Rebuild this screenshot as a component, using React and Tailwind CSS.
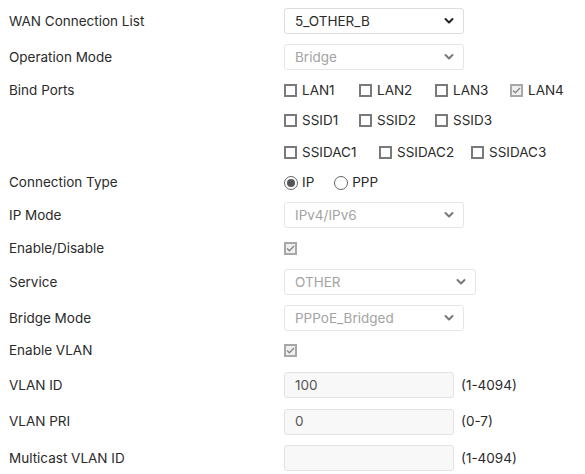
import React from 'react';

const font = { fontFamily: 'Inter, "Noto Sans", sans-serif' };

function Chevron({ muted }) {
  return (
    <svg width="10" height="7" viewBox="0 0 10 7" className="absolute right-[9px] top-1/2 -translate-y-1/2">
      <path d="M1.5 1.5 L5 5 L8.5 1.5" fill="none" stroke={muted ? '#777' : '#222'} strokeWidth="2" strokeLinecap="round" strokeLinejoin="round" />
    </svg>
  );
}

function Select({ value, disabled, wide }) {
  return (
    <div
      className={
        'relative h-[26px] rounded-[3px] border flex items-center pl-[10px] ' +
        (wide ? 'w-[192px] ' : 'w-[180px] ') +
        (disabled ? 'border-[#e6e6e6] text-[#a3a3a3] bg-white' : 'border-[#dcdcdc] text-[#2b2b2b] bg-white')
      }
    >
      {value}
      <Chevron muted={disabled} />
    </div>
  );
}

function Box({ checked }) {
  if (checked) {
    return (
      <span className="w-[13px] h-[13px] border-2 border-[#a8a8a8] bg-[#f0f0f0] flex items-center justify-center shrink-0">
        <svg width="9" height="7" viewBox="0 0 9 7">
          <path d="M1 3.5 L3.4 5.8 L8 1" fill="none" stroke="#888" strokeWidth="1.4" />
        </svg>
      </span>
    );
  }
  return <span className="w-[13px] h-[13px] border-2 border-[#7a7a7a] bg-white shrink-0"></span>;
}

function Check({ label, checked, gap }) {
  return (
    <div className={'flex items-center ' + gap}>
      <Box checked={checked} />
      <span className="ml-[5px]">{label}</span>
    </div>
  );
}

function Radio({ label, selected }) {
  return (
    <div className="flex items-center mr-[20px]">
      <span className="w-[14px] h-[14px] rounded-full border border-[#666] flex items-center justify-center bg-white">
        {selected && <span className="w-[8px] h-[8px] rounded-full bg-[#555]"></span>}
      </span>
      <span className="ml-[4px]">{label}</span>
    </div>
  );
}

function Input({ value, hint }) {
  return (
    <div className="flex items-center">
      <div className="w-[170px] h-[26px] rounded-[3px] border border-[#e3e3e3] bg-[#f8f8f8] flex items-center pl-[10px] text-[#555]">
        {value}
      </div>
      <span className="ml-[7px] text-[#2b2b2b]">{hint}</span>
    </div>
  );
}

function Row({ label, h, children }) {
  return (
    <div className={'flex items-center ' + h}>
      <div className="w-[284px] pl-[9px] shrink-0">{label}</div>
      <div className="flex items-center">{children}</div>
    </div>
  );
}

export default function App() {
  return (
    <div className="w-[585px] h-[474px] bg-white text-[13.5px] text-[#2b2b2b] pt-[3px] overflow-hidden" style={font}>
      <Row label="WAN Connection List" h="h-[36px]">
        <Select value="5_OTHER_B" />
      </Row>
      <Row label="Operation Mode" h="h-[36px]">
        <Select value="Bridge" disabled />
      </Row>
      <div className="flex">
        <div className="w-[284px] pl-[9px] shrink-0 h-[30px] flex items-center">Bind Ports</div>
        <div className="flex flex-col">
          <div className="flex items-center h-[30px]">
            <Check label="LAN1" gap="w-[75px]" />
            <Check label="LAN2" gap="w-[76px]" />
            <Check label="LAN3" gap="w-[75px]" />
            <Check label="LAN4" checked gap="" />
          </div>
          <div className="flex items-center h-[31px]">
            <Check label="SSID1" gap="w-[75px]" />
            <Check label="SSID2" gap="w-[76px]" />
            <Check label="SSID3" gap="" />
          </div>
          <div className="flex items-center h-[32px]">
            <Check label="SSIDAC1" gap="w-[95px]" />
            <Check label="SSIDAC2" gap="w-[92px]" />
            <Check label="SSIDAC3" gap="" />
          </div>
        </div>
      </div>
      <Row label="Connection Type" h="h-[29px]">
        <Radio label="IP" selected />
        <Radio label="PPP" />
      </Row>
      <Row label="IP Mode" h="h-[36px]">
        <Select value="IPv4/IPv6" disabled />
      </Row>
      <Row label="Enable/Disable" h="h-[30px]">
        <Box checked />
      </Row>
      <Row label="Service" h="h-[38px]">
        <Select value="OTHER" disabled wide />
      </Row>
      <Row label="Bridge Mode" h="h-[34px]">
        <Select value="PPPoE_Bridged" disabled />
      </Row>
      <Row label="Enable VLAN" h="h-[31px]">
        <Box checked />
      </Row>
      <Row label="VLAN ID" h="h-[38px]">
        <Input value="100" hint="(1-4094)" />
      </Row>
      <Row label="VLAN PRI" h="h-[35px]">
        <Input value="0" hint="(0-7)" />
      </Row>
      <Row label="Multicast VLAN ID" h="h-[38px]">
        <Input value="" hint="(1-4094)" />
      </Row>
    </div>
  );
}
